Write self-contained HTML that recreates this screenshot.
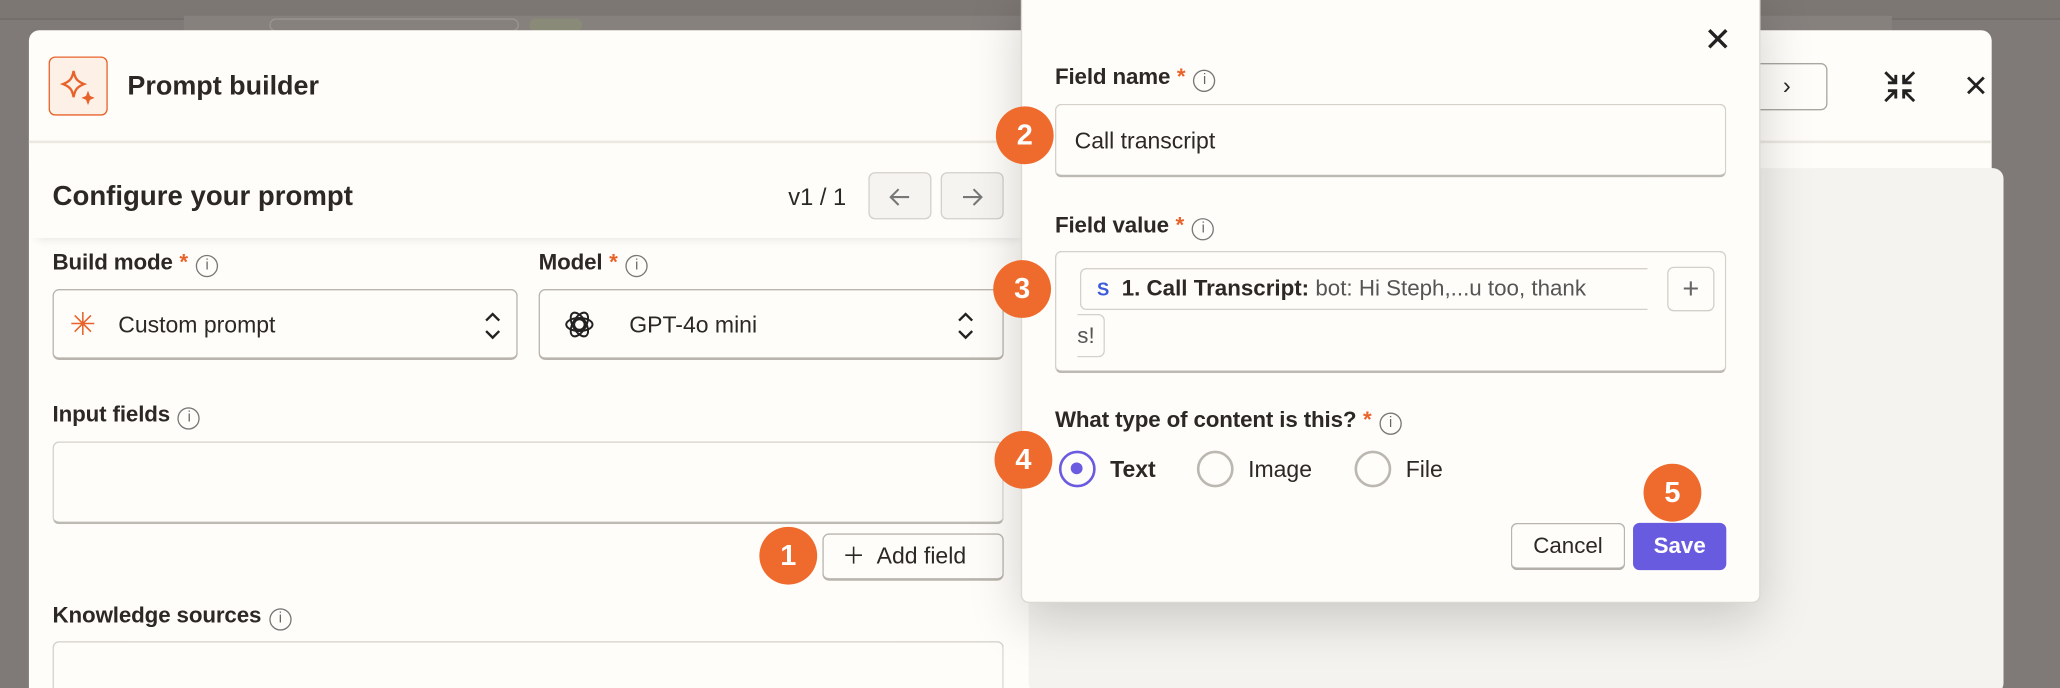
<!DOCTYPE html>
<html><head><meta charset="utf-8"><style>
*{box-sizing:border-box;margin:0;padding:0}
html,body{width:2060px;height:688px;overflow:hidden;background:#7f7a77}
body{font-family:"Liberation Sans",sans-serif;color:#2b2826}
#w{position:absolute;left:0;top:0;width:1568px;height:524px;overflow:hidden;transform:scale(1.31378);transform-origin:0 0}
.a{position:absolute}
.lbl{position:absolute;font-size:17px;font-weight:bold;color:#2b2826;letter-spacing:-.1px}
.req{color:#e8632b;margin-left:5px}
.info{display:inline-block;width:17px;height:17px;border:1.5px solid #777;border-radius:50%;font-size:11px;text-align:center;line-height:14px;color:#666;margin-left:6px;vertical-align:0;font-weight:normal}
.box{position:absolute;border:1px solid #d4d0ca;border-bottom:2px solid #bdb9b3;border-radius:5px;background:#fffdf9}
.badge{position:absolute;width:44px;height:44px;border-radius:50%;background:#ee6b2d;color:#fff;font-weight:bold;font-size:22px;text-align:center;line-height:44px}
.radio{position:absolute;width:28px;height:28px;border-radius:50%;border:2.5px solid #bbb7b1;background:#fffdf9}
.chev{position:absolute;top:16px}
</style></head><body><div id="w">
<div class="a" style="left:0;top:0;width:1568px;height:15px;background:#7c7773;border-bottom:1px solid #6f6a66"></div>
<div class="a" style="left:140px;top:12px;width:1300px;height:12px;background:#86817d"></div>
<div class="a" style="left:205px;top:14px;width:190px;height:10px;border:1px solid #9a958f;border-radius:6px"></div>
<div class="a" style="left:403px;top:14px;width:40px;height:10px;background:#8a8a78;border-radius:6px"></div>
<div class="a" style="left:22px;top:23px;width:1494px;height:510px;background:#fffdf9;border-radius:8px"></div>
<div class="a" style="left:22px;top:107px;width:1494px;height:2px;background:#ebe8e2"></div>
<div class="a" style="left:37px;top:43px;width:45px;height:45px;border:1.5px solid #e8632b;border-radius:5px;background:#fdf0e6">
<svg width="42" height="42" viewBox="0 0 42 42" style="position:absolute;left:0;top:0"><path d="M18 10 C19 16 21 18 26 20 C21 22 19 24 18 30 C17 24 15 22 10 20 C15 18 17 16 18 10Z" fill="none" stroke="#e8632b" stroke-width="1.8"/><path d="M29 25 L30.5 29 L34 30.5 L30.5 32 L29 36 L27.5 32 L24 30.5 L27.5 29Z" fill="#e8632b"/></svg></div>
<div class="a" style="left:97px;top:54px;font-size:20.5px;font-weight:bold">Prompt builder</div>
<div class="a" style="left:22px;top:111px;width:760px;height:70px;box-shadow:0 6px 8px -6px rgba(0,0,0,.12)"></div>
<div class="a" style="left:40px;top:138px;font-size:21px;font-weight:bold">Configure your prompt</div>
<div class="a" style="left:600px;top:140px;font-size:18px">v1 / 1</div>
<div class="a" style="left:661px;top:131px;width:48px;height:36px;border:1px solid #d4d0ca;border-radius:5px;background:#f6f4f0"><svg class="a" style="left:13px;top:8px" width="20" height="20" viewBox="0 0 20 20" fill="none" stroke="#777" stroke-width="1.6"><path d="M17 10H3M9 4L3 10l6 6"/></svg></div>
<div class="a" style="left:716px;top:131px;width:48px;height:36px;border:1px solid #d4d0ca;border-radius:5px;background:#f6f4f0"><svg class="a" style="left:13px;top:8px" width="20" height="20" viewBox="0 0 20 20" fill="none" stroke="#777" stroke-width="1.6"><path d="M3 10h14M11 4l6 6-6 6"/></svg></div>
<div class="lbl" style="left:40px;top:190px">Build mode<span class="req">*</span><span class="info">i</span></div>
<div class="lbl" style="left:410px;top:190px">Model<span class="req">*</span><span class="info">i</span></div>
<div class="box" style="left:40px;top:220px;width:354px;height:54px;border-color:#b9b5ae"><span class="a" style="left:12px;top:12px;color:#e8632b;font-size:24px">✳</span><span class="a" style="left:49px;top:16px;font-size:17.5px">Custom prompt</span><svg class="chev" style="left:326px" width="16" height="22" viewBox="0 0 16 22" fill="none" stroke="#222" stroke-width="1.8"><path d="M3 7l5-5 5 5M3 15l5 5 5-5"/></svg></div>
<div class="box" style="left:410px;top:220px;width:354px;height:54px;border-color:#b9b5ae"><svg class="a" style="left:18px;top:14px" width="24" height="24" viewBox="0 0 24 24" fill="none" stroke="#222" stroke-width="1.5"><circle cx="12" cy="12" r="4"/><ellipse cx="12" cy="12" rx="10" ry="5"/><ellipse cx="12" cy="12" rx="10" ry="5" transform="rotate(60 12 12)"/><ellipse cx="12" cy="12" rx="10" ry="5" transform="rotate(120 12 12)"/></svg><span class="a" style="left:68px;top:16px;font-size:17.5px">GPT-4o mini</span><svg class="chev" style="left:316px" width="16" height="22" viewBox="0 0 16 22" fill="none" stroke="#222" stroke-width="1.8"><path d="M3 7l5-5 5 5M3 15l5 5 5-5"/></svg></div>
<div class="lbl" style="left:40px;top:306px">Input fields<span class="info">i</span></div>
<div class="box" style="left:40px;top:336px;width:724px;height:63px"></div>
<div class="box" style="left:626px;top:406px;width:138px;height:36px;border-color:#b9b5ae;font-size:17.5px;line-height:32px;padding-left:14px">＋&nbsp; Add field</div>
<div class="lbl" style="left:40px;top:459px">Knowledge sources<span class="info">i</span></div>
<div class="box" style="left:40px;top:488px;width:724px;height:60px"></div>
<div class="a" style="left:783px;top:128px;width:742px;height:400px;background:#f5f3ef;border-radius:8px"></div>
<div class="a" style="left:1300px;top:48px;width:91px;height:36px;border:1.5px solid #aaa6a0;border-radius:5px;font-size:18px;line-height:32px;padding-left:26px">5&nbsp;&nbsp;&nbsp; ›</div>
<svg class="a" style="left:1432px;top:52px" width="28" height="28" viewBox="0 0 28 28" fill="none" stroke="#222" stroke-width="2.2"><path d="M3 3l8 8M11 5v6H5M25 3l-8 8M17 5v6h6M3 25l8-8M11 23v-6H5M25 25l-8-8M17 23v-6h6"/></svg>
<svg class="a" style="left:1496px;top:57px" width="16" height="16" viewBox="0 0 16 16" stroke="#222" stroke-width="2.2"><path d="M2 2l12 12M14 2L2 14"/></svg>
<div class="a" style="left:777px;top:-8px;width:563px;height:467px;background:#fffdf9;border:1px solid #dcd8d2;border-radius:6px;box-shadow:0 12px 40px rgba(0,0,0,.18)"></div>
<svg class="a" style="left:1299px;top:21px" width="17" height="17" viewBox="0 0 17 17" stroke="#222" stroke-width="2.6"><path d="M2 2l13 13M15 2L2 15"/></svg>
<div class="lbl" style="left:803px;top:49px">Field name<span class="req">*</span><span class="info">i</span></div>
<div class="box" style="left:803px;top:79px;width:511px;height:56px"><span class="a" style="left:14px;top:17px;font-size:17.5px">Call transcript</span></div>
<div class="lbl" style="left:803px;top:162px">Field value<span class="req">*</span><span class="info">i</span></div>
<div class="box" style="left:803px;top:191px;width:511px;height:93px"></div>
<div class="a" style="left:822px;top:204px;width:432px;height:32px;border:1px solid #d4d0ca;border-right:none;border-radius:5px 0 0 5px;white-space:nowrap;overflow:hidden;font-size:17px;line-height:30px;padding-left:12px"><b style="color:#3b5bdb;font-size:14px">S</b>&nbsp; <b>1. Call Transcript:</b> <span style="color:#555">bot: Hi Steph,...u too, thank</span></div>
<div class="a" style="left:1269px;top:203px;width:36px;height:34px;border:1px solid #d4d0ca;border-radius:5px;text-align:center;line-height:32px;font-size:22px;color:#666">+</div>
<div class="a" style="left:820px;top:239px;width:21px;height:33px;border:1px solid #d4d0ca;border-left:none;border-radius:0 5px 5px 0;font-size:17px;line-height:32px;color:#555">s!</div>
<div class="lbl" style="left:803px;top:310px"><b>What type of content is this?</b><span class="req">*</span><span class="info">i</span></div>
<div class="radio" style="left:806px;top:343px;border-color:#6a5be0"><div class="a" style="left:7px;top:7px;width:9px;height:9px;border-radius:50%;background:#6a5be0"></div></div>
<div class="a" style="left:845px;top:347px;font-size:17.5px;font-weight:bold">Text</div>
<div class="radio" style="left:911px;top:343px"></div>
<div class="a" style="left:950px;top:347px;font-size:17.5px">Image</div>
<div class="radio" style="left:1031px;top:343px"></div>
<div class="a" style="left:1070px;top:347px;font-size:17.5px">File</div>
<div class="a" style="left:1150px;top:398px;width:87px;height:36px;border:1px solid #b9b5ae;border-bottom:2px solid #b3afa9;border-radius:5px;font-size:17px;line-height:33px;text-align:center">Cancel</div>
<div class="a" style="left:1243px;top:398px;width:71px;height:36px;background:#695be0;border-radius:5px;font-size:17px;line-height:35px;text-align:center;color:#fff;font-weight:bold">Save</div>
<div class="badge" style="left:578px;top:401px">1</div>
<div class="badge" style="left:758px;top:81px">2</div>
<div class="badge" style="left:756px;top:198px">3</div>
<div class="badge" style="left:757px;top:328px">4</div>
<div class="badge" style="left:1251px;top:353px">5</div>
</div></body></html>
